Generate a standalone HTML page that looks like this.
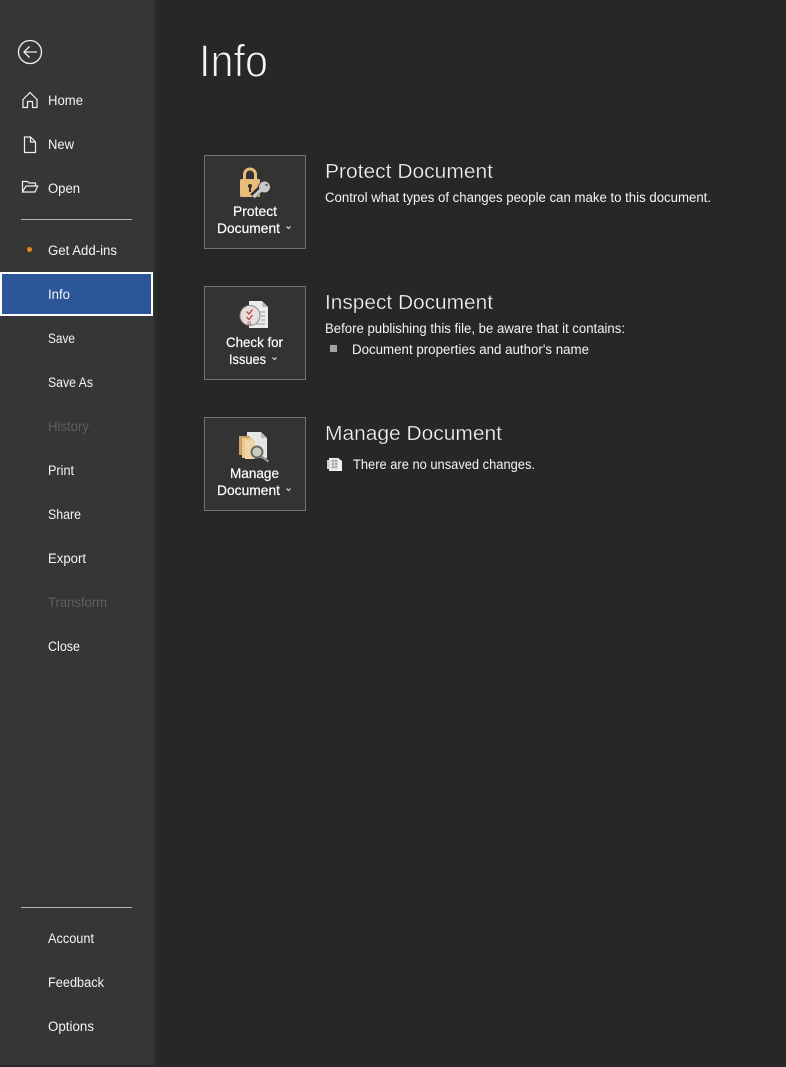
<!DOCTYPE html>
<html lang="en">
<head>
<meta charset="utf-8">
<title>Info</title>
<style>
html,body{margin:0;padding:0;width:786px;height:1067px;overflow:hidden;background:#272727}
svg{display:block}
text{font-family:"Liberation Sans","DejaVu Sans",sans-serif;fill:#f4f4f4}
.n{font-size:13.5px}
.d{fill:#5f5f5f}
.h{font-size:20.5px;fill:#f4f4f4;stroke:#272727;stroke-width:.3px}
.b{font-size:13.5px}
.t{font-size:14px;fill:#fff;stroke:#fff;stroke-width:.2px}
.i{fill:none;stroke:#f0f0f0;stroke-width:1.2}
</style>
</head>
<body>
<svg width="786" height="1067" viewBox="0 0 786 1067" xmlns="http://www.w3.org/2000/svg">
<rect width="786" height="1067" fill="#272727"/>
<rect width="154" height="1065" fill="#363636"/>
<rect x="154" width="3" height="1067" fill="#2b2b2b"/>

<!-- back -->
<circle cx="30" cy="52" r="11.5" fill="none" stroke="#f0f0f0" stroke-width="1.3"/>
<path d="M37 52H24M29.500 46.500L24 52l5.500 5.500" fill="none" stroke="#f0f0f0" stroke-width="1.300"/>

<!-- nav icons -->
<path class="i" d="M23 99.500v8h4.500v-6h5v6H37v-8M22.500 100l7.500-7.500 7.500 7.500"/>
<path class="i" d="M24.500 137v15.500h11V142l-5-5zM30.500 137v5h5"/>
<path class="i" d="M22.500 192v-10.500h5l1.500 1.500h6.500v2.500M22.500 192h12.500l2.700-6H26z"/>

<text class="n" x="48" y="105" textLength="35" lengthAdjust="spacingAndGlyphs">Home</text>
<text class="n" x="48" y="149" textLength="26" lengthAdjust="spacingAndGlyphs">New</text>
<text class="n" x="48" y="193" textLength="32" lengthAdjust="spacingAndGlyphs">Open</text>
<rect x="21" y="219" width="111" height="1" fill="#b4b4b4"/>
<circle cx="29.500" cy="249.500" r="2.500" fill="#e28a1e"/>
<text class="n" x="48" y="255" textLength="69" lengthAdjust="spacingAndGlyphs">Get Add-ins</text>

<rect x="1" y="273" width="151" height="42" fill="#2b579a" stroke="#fff" stroke-width="2"/>
<text class="n" x="48" y="299" textLength="22" lengthAdjust="spacingAndGlyphs">Info</text>

<text class="n" x="48" y="343" textLength="27" lengthAdjust="spacingAndGlyphs">Save</text>
<text class="n" x="48" y="387" textLength="45" lengthAdjust="spacingAndGlyphs">Save As</text>
<text class="n d" x="48" y="431" textLength="41" lengthAdjust="spacingAndGlyphs">History</text>
<text class="n" x="48" y="475" textLength="26" lengthAdjust="spacingAndGlyphs">Print</text>
<text class="n" x="48" y="519" textLength="33" lengthAdjust="spacingAndGlyphs">Share</text>
<text class="n" x="48" y="563" textLength="38" lengthAdjust="spacingAndGlyphs">Export</text>
<text class="n d" x="48" y="607" textLength="59" lengthAdjust="spacingAndGlyphs">Transform</text>
<text class="n" x="48" y="651" textLength="32" lengthAdjust="spacingAndGlyphs">Close</text>
<rect x="21" y="907" width="111" height="1" fill="#b4b4b4"/>
<text class="n" x="48" y="943" textLength="46" lengthAdjust="spacingAndGlyphs">Account</text>
<text class="n" x="48" y="987" textLength="56" lengthAdjust="spacingAndGlyphs">Feedback</text>
<text class="n" x="48" y="1031" textLength="46" lengthAdjust="spacingAndGlyphs">Options</text>

<!-- title -->
<text x="199" y="76.500" font-size="45" textLength="69" lengthAdjust="spacingAndGlyphs" style="fill:#f4f4f4;stroke:#272727;stroke-width:1.100px">Info</text>

<!-- Protect -->
<rect x="204.500" y="155.500" width="101" height="93" fill="#333" stroke="#727272"/>
<path d="M244.500 180v-5.500a5.500 5.500 0 0 1 11 0v5.500" fill="none" stroke="#e8bd7a" stroke-width="3"/>
<rect x="240" y="179" width="20" height="18" rx="1.500" fill="#e8bd7a"/>
<circle cx="250" cy="186" r="2" fill="#3a3028"/>
<rect x="249" y="186" width="2" height="6" fill="#3a3028"/>
<path d="M252.500 196.500l9-8.500" stroke="#333" stroke-width="6.500" fill="none"/>
<circle cx="264.500" cy="187.500" r="6.500" fill="#333"/>
<path d="M253.500 197l8.500-8" stroke="#c9c9c9" stroke-width="3.500" fill="none"/>
<circle cx="264.500" cy="187" r="5.500" fill="#c9c9c9"/>
<circle cx="266.500" cy="185" r="1.200" fill="#555"/>
<text class="t" x="233" y="216" textLength="44" lengthAdjust="spacingAndGlyphs">Protect</text>
<text class="t" x="217" y="233" textLength="63" lengthAdjust="spacingAndGlyphs">Document</text>
<path d="M286.500 226.500l2 2 2-2" fill="none" stroke="#e8e8e8"/>
<text class="h" x="325" y="178" textLength="168" lengthAdjust="spacingAndGlyphs">Protect Document</text>
<text class="b" x="325" y="202" textLength="386" lengthAdjust="spacingAndGlyphs">Control what types of changes people can make to this document.</text>

<!-- Inspect -->
<rect x="204.500" y="286.500" width="101" height="93" fill="#333" stroke="#727272"/>
<path d="M249 301h13l6 6v21h-19z" fill="#ececec"/>
<path d="M262 301v6h6z" fill="#bdbdbd"/>
<path d="M260 312h5M261 316h4M261 320h4M256 324h9" stroke="#9a9a9a" stroke-width="1"/>
<circle cx="250" cy="315.500" r="10" fill="#e6dfdd" stroke="#8a8a8a" stroke-width="1"/>
<path d="M246.500 311.500l2.500 2.500 3.500-4.500M246.500 317l2.500 2.500 3.500-4.500" fill="none" stroke="#c4453c" stroke-width="1.300"/>
<rect x="248" y="322" width="2.500" height="2.500" fill="none" stroke="#b06a60" stroke-width=".8"/>
<text class="t" x="226" y="347" textLength="57" lengthAdjust="spacingAndGlyphs">Check for</text>
<text class="t" x="229" y="364" textLength="37" lengthAdjust="spacingAndGlyphs">Issues</text>
<path d="M272.500 357.500l2 2 2-2" fill="none" stroke="#e8e8e8"/>
<text class="h" x="325" y="309" textLength="168" lengthAdjust="spacingAndGlyphs">Inspect Document</text>
<text class="b" x="325" y="333" textLength="300" lengthAdjust="spacingAndGlyphs">Before publishing this file, be aware that it contains:</text>
<rect x="330" y="345" width="7" height="7" fill="#a3a3a3"/>
<text class="b" x="352" y="354" textLength="237" lengthAdjust="spacingAndGlyphs">Document properties and author's name</text>

<!-- Manage -->
<rect x="204.500" y="417.500" width="101" height="93" fill="#333" stroke="#727272"/>
<path d="M247 432h14l6 6v20h-20z" fill="#e6e6e6"/>
<path d="M261 432v6h6z" fill="#bbb"/>
<rect x="239" y="436" width="11" height="19" fill="#c9a263"/>
<rect x="242" y="438" width="11" height="20" fill="#e8c88f"/>
<rect x="245" y="440" width="10" height="19" fill="#f0d6a6"/>
<circle cx="257" cy="452" r="5.500" fill="#cfcabf" stroke="#6a6a6a" stroke-width="2"/>
<path d="M261.500 456.500l7 5" stroke="#9a9a9a" stroke-width="2.200"/>
<text class="t" x="230" y="478" textLength="49" lengthAdjust="spacingAndGlyphs">Manage</text>
<text class="t" x="217" y="495" textLength="63" lengthAdjust="spacingAndGlyphs">Document</text>
<path d="M286.500 488.500l2 2 2-2" fill="none" stroke="#e8e8e8"/>
<text class="h" x="325" y="440" textLength="177" lengthAdjust="spacingAndGlyphs">Manage Document</text>
<path d="M329 458h9l4 3v10h-13z" fill="#f0f0f0"/>
<rect x="327" y="460" width="3" height="9" fill="#cfcfcf"/>
<path d="M331 461h7M331 464h7M331 467h7M333 459v10M336 459v10" stroke="#8a8a8a" stroke-width=".8"/>
<text class="b" x="353" y="469" textLength="182" lengthAdjust="spacingAndGlyphs">There are no unsaved changes.</text>
</svg>
</body>
</html>
